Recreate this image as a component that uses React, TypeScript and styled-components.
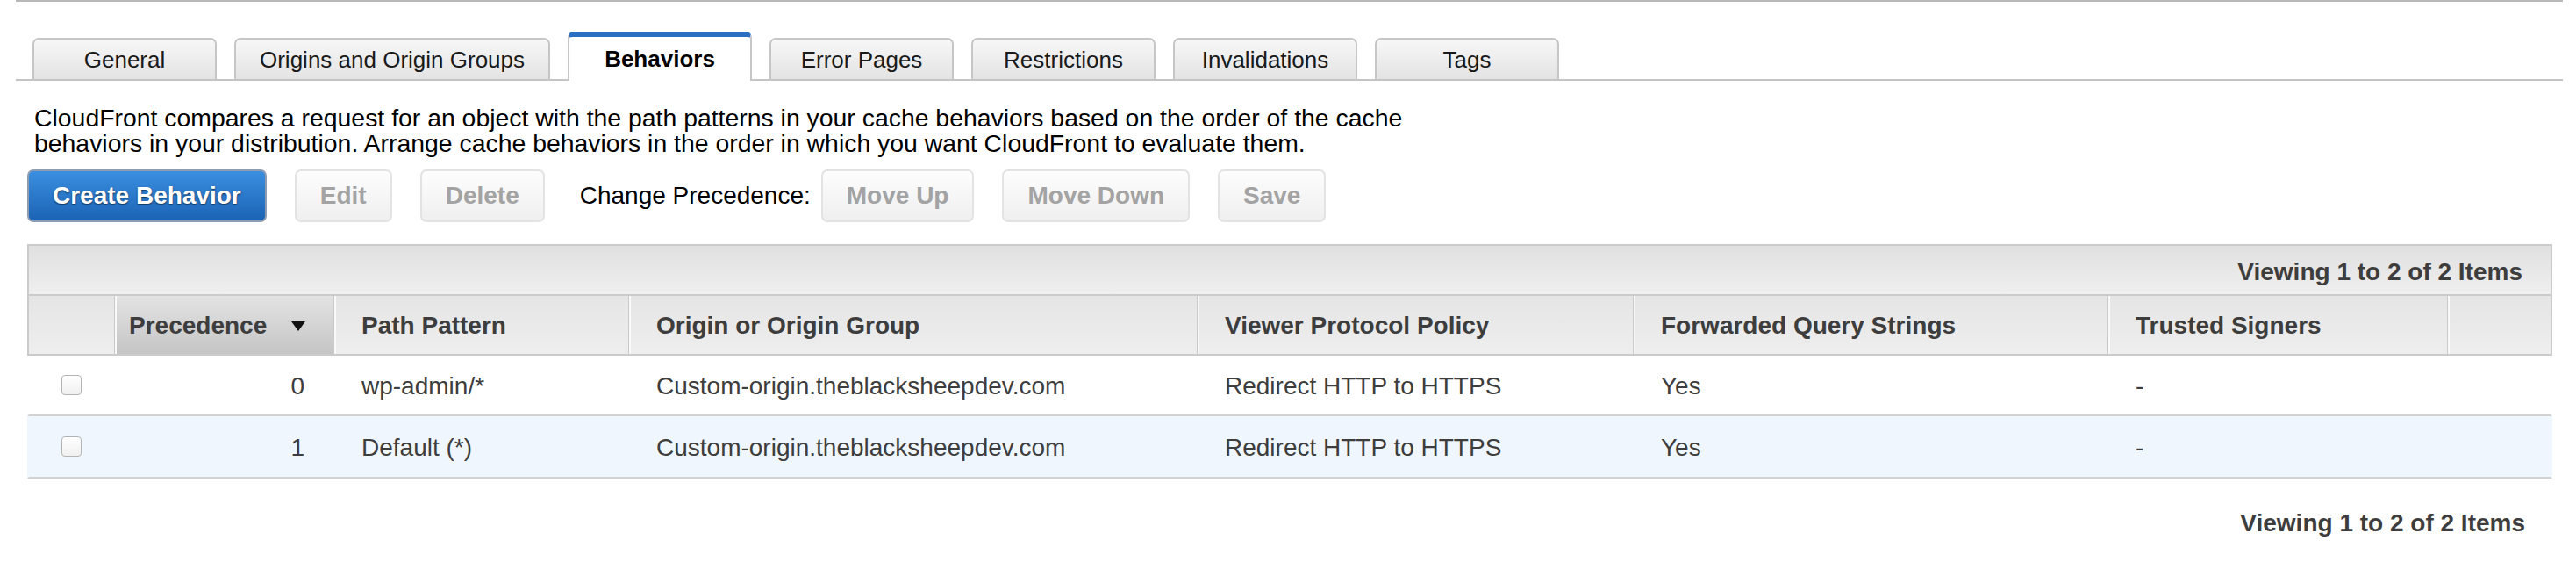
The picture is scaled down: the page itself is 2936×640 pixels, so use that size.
import React from "react";
import styled, { createGlobalStyle, css } from "styled-components";

const GlobalStyle = createGlobalStyle`
  body {
    margin: 0;
    background: #ffffff;
    font-family: "Liberation Sans", Arial, Helvetica, sans-serif;
    color: #000;
  }
`;

const Page = styled.div`
  padding: 0 15px 0 18px;
`;

const TopRule = styled.div`
  height: 2px;
  background: #b8b8b8;
`;

const TabBar = styled.div`
  display: flex;
  align-items: flex-end;
  gap: 20px;
  margin-top: 34px;
  padding-left: 19px;
  border-bottom: 2px solid #c4c4c4;
`;

const Tab = styled.div<{ $active?: boolean; $wide?: boolean }>`
  box-sizing: border-box;
  width: ${(p) => (p.$wide ? "360px" : "210px")};
  display: flex;
  align-items: center;
  justify-content: center;
  font-size: 26px;
  border: 2px solid #c6c6c6;
  border-bottom: none;
  border-radius: 7px 7px 0 0;
  ${(p) =>
    p.$active
      ? css`
          height: 56px;
          margin-bottom: -2px;
          border-top: 6px solid #2b6fc2;
          background: #ffffff;
          font-weight: bold;
          color: #000;
        `
      : css`
          height: 47px;
          padding-top: 2px;
          background: linear-gradient(#f7f7f7, #e3e3e3);
          color: #1a1a1a;
        `}
`;

const Content = styled.div`
  padding: 0 12px 0 13px;
`;

const Description = styled.p`
  margin: 28px 0 0;
  padding-left: 8px;
  font-size: 28.4px;
  line-height: 29px;
  max-width: 1620px;
`;

const Toolbar = styled.div`
  display: flex;
  align-items: center;
  gap: 32px;
  margin-top: 15px;
`;

const Button = styled.button<{ $primary?: boolean }>`
  box-sizing: border-box;
  height: 60px;
  padding: 0 27px;
  border-radius: 7px;
  font-family: inherit;
  font-size: 28px;
  font-weight: bold;
  ${(p) =>
    p.$primary
      ? css`
          border: 2px solid #8d9cb0;
          background: linear-gradient(#3b8fe0, #1b63b5);
          color: #ffffff;
          text-shadow: 0 1px 2px rgba(0, 0, 0, 0.65);
        `
      : css`
          border: 2px solid #e3e3e3;
          background: linear-gradient(#fdfdfd, #efefef);
          color: #a3a3a3;
        `}
`;

const ToolbarLabel = styled.span`
  font-size: 28px;
  margin: 0 -20px 0 8px;
`;

const Table = styled.div`
  margin-top: 25px;
  color: #3d3d3d;
  font-size: 28px;
`;

const TopBar = styled.div`
  box-sizing: border-box;
  height: 59px;
  border: 2px solid #cbcbcb;
  background: linear-gradient(#e0e0e0, #efefef);
  display: flex;
  align-items: center;
  justify-content: flex-end;
  padding: 4px 32px 0 0;
  font-weight: bold;
`;

const cols = "97px 250px 336px 648px 497px 541px 387px 1fr";

const HeaderRow = styled.div`
  box-sizing: border-box;
  display: grid;
  grid-template-columns: ${cols};
  height: 68px;
  border: 2px solid #cbcbcb;
  border-top: none;
`;

const HeaderCell = styled.div<{ $sorted?: boolean; $first?: boolean }>`
  display: flex;
  align-items: center;
  justify-content: space-between;
  padding: 2px 32px 0 ${(p) => (p.$sorted ? "17px" : "32px")};
  font-weight: bold;
  background: ${(p) =>
    p.$sorted
      ? "linear-gradient(#e3e3e3, #c5c5c5)"
      : "linear-gradient(#e5e5e5, #eeeeee)"};
  box-shadow: ${(p) =>
    p.$first ? "none" : "inset 1px 0 0 #c9c9c9, inset 3px 0 0 #f9f9f9"};
`;

const Row = styled.div<{ $alt?: boolean }>`
  box-sizing: border-box;
  display: grid;
  grid-template-columns: ${cols};
  height: ${(p) => (p.$alt ? "71px" : "69px")};
  border-left: 2px solid transparent;
  border-right: 2px solid transparent;
  border-bottom: 2px solid #d2d2d2;
  background: ${(p) => (p.$alt ? "#eff6fd" : "#ffffff")};
`;

const Cell = styled.div<{ $right?: boolean; $center?: boolean }>`
  display: flex;
  align-items: center;
  justify-content: ${(p) =>
    p.$center ? "center" : p.$right ? "flex-end" : "flex-start"};
  padding: ${(p) =>
    p.$center ? "0" : p.$right ? "3px 33px 0 0" : "3px 0 0 32px"};
  white-space: nowrap;
`;

const Checkbox = styled.span`
  box-sizing: border-box;
  width: 23px;
  height: 23px;
  border: 1px solid #b3b3b3;
  border-radius: 4px;
  background: linear-gradient(#ffffff, #f0f0f0);
`;

const Footer = styled.div`
  margin-top: 35px;
  padding-right: 31px;
  text-align: right;
  font-size: 28px;
  line-height: 32px;
  font-weight: bold;
  color: #3d3d3d;
`;

const SortArrow = () => (
  <svg width="16" height="11" viewBox="0 0 16 11">
    <path d="M0 0h16L8 11z" fill="#111" />
  </svg>
);

const tabs = [
  "General",
  "Origins and Origin Groups",
  "Behaviors",
  "Error Pages",
  "Restrictions",
  "Invalidations",
  "Tags",
];

const behaviors = [
  { precedence: 0, path: "wp-admin/*" },
  { precedence: 1, path: "Default (*)" },
];

const App = () => {
  return (
    <>
      <GlobalStyle />
      <Page>
        <TopRule />
        <TabBar>
          {tabs.map((t) => (
            <Tab
              key={t}
              $active={t === "Behaviors"}
              $wide={t === "Origins and Origin Groups"}
            >
              {t}
            </Tab>
          ))}
        </TabBar>
        <Content>
          <Description>
            CloudFront compares a request for an object with the path patterns
            in your cache behaviors based on the order of the cache behaviors in
            your distribution. Arrange cache behaviors in the order in which you
            want CloudFront to evaluate them.
          </Description>
          <Toolbar>
            <Button $primary>Create Behavior</Button>
            <Button>Edit</Button>
            <Button>Delete</Button>
            <ToolbarLabel>Change Precedence:</ToolbarLabel>
            <Button>Move Up</Button>
            <Button>Move Down</Button>
            <Button>Save</Button>
          </Toolbar>
          <Table>
            <TopBar>Viewing 1 to 2 of 2 Items</TopBar>
            <HeaderRow>
              <HeaderCell $first />
              <HeaderCell $sorted>
                Precedence
                <SortArrow />
              </HeaderCell>
              <HeaderCell>Path Pattern</HeaderCell>
              <HeaderCell>Origin or Origin Group</HeaderCell>
              <HeaderCell>Viewer Protocol Policy</HeaderCell>
              <HeaderCell>Forwarded Query Strings</HeaderCell>
              <HeaderCell>Trusted Signers</HeaderCell>
              <HeaderCell />
            </HeaderRow>
            {behaviors.map((b, i) => (
              <Row key={b.path} $alt={i % 2 === 1}>
                <Cell $center>
                  <Checkbox />
                </Cell>
                <Cell $right>{b.precedence}</Cell>
                <Cell>{b.path}</Cell>
                <Cell>Custom-origin.theblacksheepdev.com</Cell>
                <Cell>Redirect HTTP to HTTPS</Cell>
                <Cell>Yes</Cell>
                <Cell>-</Cell>
                <Cell />
              </Row>
            ))}
          </Table>
          <Footer>Viewing 1 to 2 of 2 Items</Footer>
        </Content>
      </Page>
    </>
  );
};

export default App;
